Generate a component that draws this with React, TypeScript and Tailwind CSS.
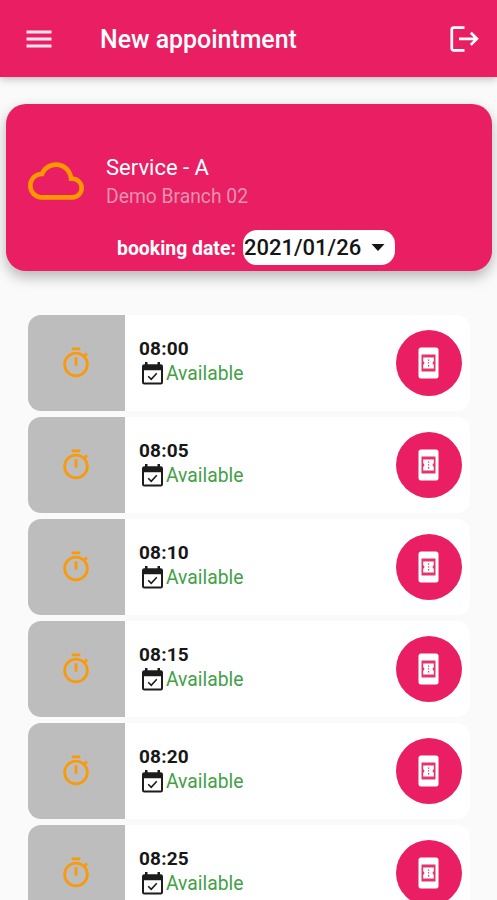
const slots = ['08:00', '08:05', '08:10', '08:15', '08:20', '08:25'];

function MenuIcon() {
  return (
    <svg className="h-[18px] w-[26px]" viewBox="0 0 26 18" fill="#fde6ee">
      <path d="M0.5 0.5h25v3h-25zM0.5 7.5h25v3h-25zM0.5 14.5h25v3h-25z" />
    </svg>
  );
}

function ExitIcon() {
  return (
    <svg className="h-[26px] w-[29px]" viewBox="0 0 29 26" fill="none" stroke="white" strokeWidth="2.7">
      <path d="M14.5 1.6H3.6a1.8 1.8 0 0 0-1.8 1.8v19.2a1.8 1.8 0 0 0 1.8 1.8h10.9" />
      <path d="M9 12.8h17.5M20.8 6.7l6.1 6.1-6.1 6.1" />
    </svg>
  );
}

function CloudIcon() {
  return (
    <svg className="h-14 w-14" viewBox="0 0 24 24" fill="#ff9800">
      <path d="M19.35 10.04C18.67 6.59 15.64 4 12 4 9.11 4 6.6 5.64 5.35 8.04 2.34 8.36 0 10.91 0 14c0 3.31 2.69 6 6 6h13c2.76 0 5-2.24 5-5 0-2.64-2.05-4.78-4.65-4.96zM19 18H6c-2.21 0-4-1.79-4-4s1.79-4 4-4h.71C7.37 7.69 9.48 6 12 6c3.04 0 5.5 2.46 5.5 5.5v.5H19c1.66 0 3 1.34 3 3s-1.34 3-3 3z" />
    </svg>
  );
}

function TimerIcon() {
  return (
    <svg className="mr-px h-[34px] w-[34px]" viewBox="0 0 24 24" fill="#f99a0c">
      <path d="M15 1H9v2h6V1zm-4 13h2V8h-2v6zm8.03-6.61 1.42-1.42c-.43-.51-.9-.99-1.41-1.41l-1.42 1.42C16.07 4.74 14.12 4 12 4c-4.97 0-9 4.03-9 9s4.02 9 9 9 9-4.03 9-9c0-2.12-.74-4.07-1.97-5.61zM12 20c-3.87 0-7-3.13-7-7s3.13-7 7-7 7 3.13 7 7-3.13 7-7 7z" />
    </svg>
  );
}

function CalendarIcon() {
  return (
    <svg className="mb-[2px] h-[23px] w-[21px]" viewBox="0 0 21 23" fill="none">
      <path fill="#1c1c1c" fillRule="evenodd" d="M3 0h2.500v2.300h10V0H18v2.300h.8A2.200 2.200 0 0 1 21 4.500v15.800a2.200 2.200 0 0 1-2.200 2.200H2.200A2.200 2.200 0 0 1 0 20.300V4.500a2.200 2.200 0 0 1 2.200-2.200H3zM2 8.300v12.200h17V8.300z" />
      <path d="M6.200 14.300l3 3 5.600-6" stroke="#1c1c1c" strokeWidth="1.6" />
    </svg>
  );
}

function TicketPhoneIcon() {
  return (
    <svg className="mr-px h-8 w-[21px]" viewBox="0 0 21 32">
      <rect x="0.5" y="0.5" width="20" height="31" rx="2.500" fill="white" />
      <path fill="#e2356a" d="M3.500 7.500h14v17h-14z" />
      <path fill="white" d="M5.200 10.500h10.600v3.800a1.800 1.800 0 0 0 0 3.400v3.800H5.200v-3.800a1.800 1.800 0 0 0 0-3.400z" />
      <path fill="#e2356a" d="M9.900 12.500h1.300v1.300H9.900zM9.900 15.300h1.300v1.300H9.900zM9.900 18.100h1.300v1.300H9.900z" />
    </svg>
  );
}

function Slot({ time }: { time: string }) {
  return (
    <li className="flex h-24 shrink-0 overflow-hidden rounded-[13px] bg-white">
      <div className="flex w-[97px] items-center justify-center bg-[#bdbdbd]">
        <TimerIcon />
      </div>
      <div className="flex-1 pt-[22px] pl-[14px]">
        <div className="h-[24px] text-[19px] leading-[24px] font-bold tracking-[0.2px] text-[#171717]">{time}</div>
        <div className="flex h-[26px] items-center pl-[3px]">
          <CalendarIcon />
          <span className="ml-[3px] text-[19.3px] leading-[26px] text-[#43a047]">Available</span>
        </div>
      </div>
      <button className="mt-[15px] mr-2 flex size-[66px] items-center justify-center rounded-full bg-[#e91e63]">
        <TicketPhoneIcon />
      </button>
    </li>
  );
}

export default function App() {
  return (
    <div className="flex h-[900px] w-[497px] flex-col overflow-hidden bg-[#fafafa] font-[Roboto,sans-serif]">
      <header className="z-10 flex h-[77px] shrink-0 items-center bg-[#e91e63] pr-[18px] pl-[26px] shadow-[0_2px_8px_rgba(0,0,0,0.25)]">
        <MenuIcon />
        <h1 className="ml-12 flex-1 pt-[2px] text-[24.9px] leading-7 font-medium text-white">New appointment</h1>
        <ExitIcon />
      </header>

      <section className="mt-[27px] mr-[5px] ml-[6px] flex h-[167px] shrink-0 flex-col rounded-[20px] bg-[#e91e63] shadow-[0_6px_14px_rgba(0,0,0,0.28)]">
        <div className="flex h-[126px] pt-[49px] pl-[22px]">
          <CloudIcon />
          <div className="ml-[22px]">
            <div className="h-7 text-[22px] leading-[30px] text-white">Service - A</div>
            <div className="text-[19.3px] leading-[32px] text-[#e593b0]">Demo Branch 02</div>
          </div>
        </div>
        <div className="flex h-[35px] items-center pl-[111px]">
          <span className="w-[126px] pt-[2px] text-[19.400px] font-bold whitespace-nowrap text-white">booking date:</span>
          <button className="flex h-[35px] w-[152px] items-center rounded-[14px] bg-white pl-px text-[22px] font-medium text-[#151515]">
            <span className="w-[127px] text-left">2021/01/26</span>
            <svg className="h-[7px] w-[14px]" viewBox="0 0 14 7" fill="#151515"><path d="M0.500 0h13L7 7z" /></svg>
          </button>
        </div>
      </section>

      <ul className="mt-11 mr-[27px] ml-7 flex flex-col gap-[6px]">
        {slots.map((time) => <Slot key={time} time={time} />)}
      </ul>
    </div>
  );
}
